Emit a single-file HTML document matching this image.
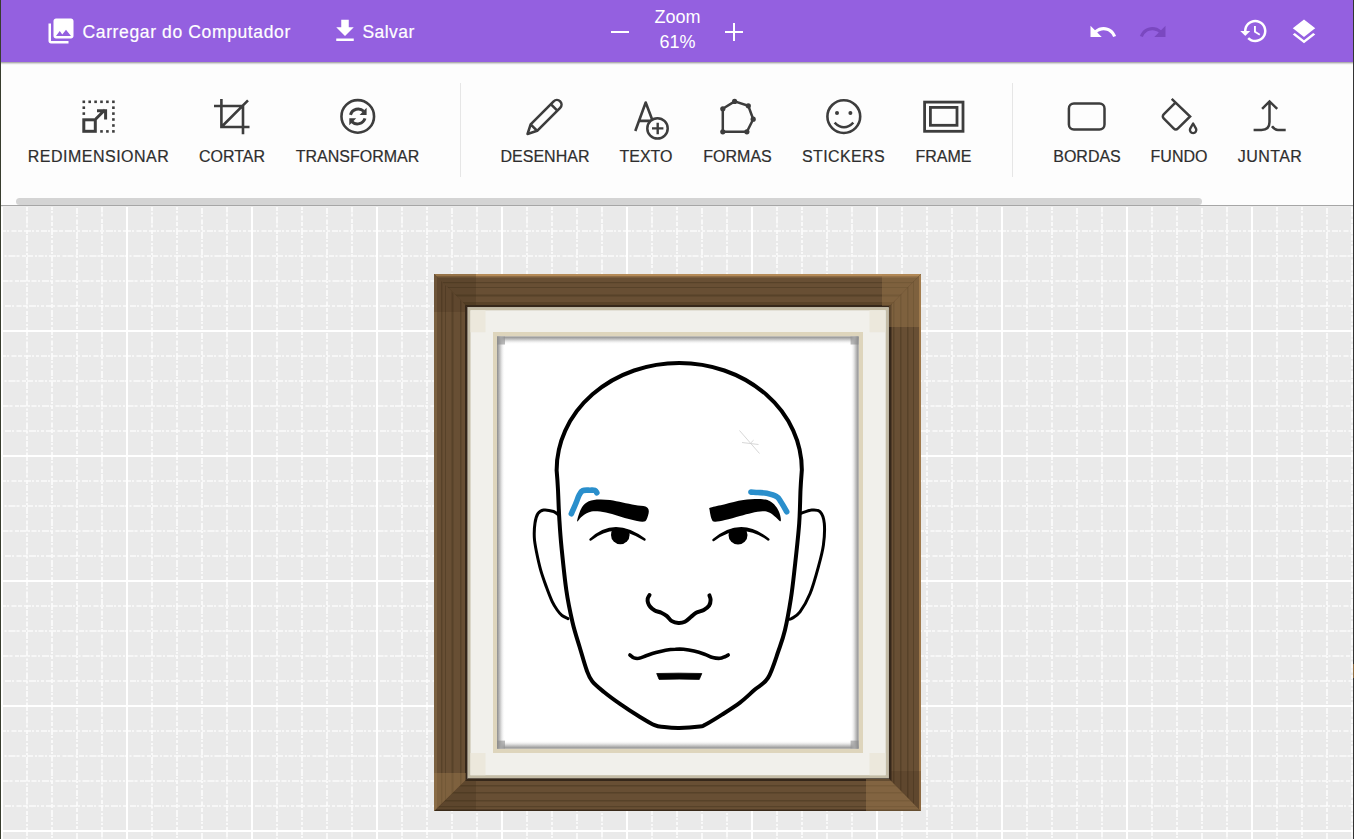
<!DOCTYPE html>
<html><head><meta charset="utf-8">
<style>
*{margin:0;padding:0;box-sizing:border-box}
html,body{width:1354px;height:839px;overflow:hidden}
body{position:relative;font-family:"Liberation Sans",sans-serif;background:#eaeaea}
#canvas{position:absolute;left:0;top:206px;width:1354px;height:633px;background-color:#eaeaea}
#topbar{position:absolute;left:0;top:0;width:1354px;height:62px;background:#9460e0;box-shadow:0 1px 2px rgba(0,0,0,.45);z-index:3}
#toolbar{position:absolute;left:0;top:62px;width:1354px;height:144px;background:#fdfdfd;border-bottom:1px solid #a6a6a6;z-index:2}
.tb{position:absolute;color:#fff;font-size:17.5px;line-height:18px;white-space:nowrap;-webkit-text-stroke:.2px #fff}
.ic{position:absolute}
.lbl{position:absolute;top:148.7px;font-size:16px;line-height:16px;color:#2e2e2e;-webkit-text-stroke:.2px #2e2e2e;white-space:nowrap;transform:translateX(-50%)}
.sep{position:absolute;top:83px;width:1px;height:94px;background:#e6e6e6}
#thumb{position:absolute;left:16px;top:198px;width:1186px;height:7px;border-radius:4px;background:#d4d4d4}
#lb{position:absolute;left:0;top:0;width:1px;height:839px;background:#383d2e;z-index:9}
#rb{position:absolute;right:0;top:0;width:1px;height:839px;background:#333;z-index:9}
</style></head><body>
<div id="canvas"><svg style="position:absolute;left:0;top:0" width="1354" height="633"><defs><pattern id="gp" x="0" y="0" width="125" height="125" patternUnits="userSpaceOnUse">
<g fill="#fff"><rect x="1" y="0" width="2" height="125"/><rect x="0" y="124" width="125" height="1"/><rect x="0" y="0" width="125" height="1"/></g>
<g stroke="#fff" stroke-width="1.7" opacity=".85">
<path d="M27 0V125" stroke-dasharray="5 1.5 2 2 7 1 3 2.5 4 1 6 2 2 1.5"/><path d="M52 0V125" stroke-dasharray="3 2 6 1 2 2.5 5 1.5 4 2 7 1 2 2" stroke-dashoffset="7"/><path d="M77 0V125" stroke-dasharray="3 2 6 1 2 2.5 5 1.5 4 2 7 1 2 2" stroke-dashoffset="3"/><path d="M102 0V125" stroke-dasharray="5 1.5 2 2 7 1 3 2.5 4 1 6 2 2 1.5" stroke-dashoffset="11"/>
<path d="M0 25H125" stroke-dasharray="3 2 6 1 2 2.5 5 1.5 4 2 7 1 2 2" stroke-dashoffset="5"/><path d="M0 50H125" stroke-dasharray="5 1.5 2 2 7 1 3 2.5 4 1 6 2 2 1.5" stroke-dashoffset="2"/><path d="M0 75H125" stroke-dasharray="5 1.5 2 2 7 1 3 2.5 4 1 6 2 2 1.5" stroke-dashoffset="9"/><path d="M0 100H125" stroke-dasharray="3 2 6 1 2 2.5 5 1.5 4 2 7 1 2 2"/>
</g></pattern></defs><rect width="1354" height="633" fill="url(#gp)"/></svg></div>
<div style="position:absolute;left:0;top:206px;width:1354px;height:1px;background:#ececec;z-index:1"></div>
<svg style="position:absolute;left:0;top:0;z-index:1" width="1354" height="839" viewBox="0 0 1354 839">
<defs>
 <clipPath id="cT"><path d="M434 274 H921 L888.7 307.3 H467.5 Z"/></clipPath>
 <clipPath id="cB"><path d="M434 811 H921 L888.7 778.2 H467.5 Z"/></clipPath>
 <clipPath id="cL"><path d="M434 274 L467.5 307.3 V778.2 L434 811 Z"/></clipPath>
 <clipPath id="cR"><path d="M921 274 L888.7 307.3 V778.2 L921 811 Z"/></clipPath>
 <linearGradient id="shT" x1="0" y1="0" x2="0" y2="1"><stop offset="0" stop-color="#8c8c8c"/><stop offset=".45" stop-color="#d0d0d0"/><stop offset="1" stop-color="#fff" stop-opacity="0"/></linearGradient>
 <linearGradient id="shB" x1="0" y1="1" x2="0" y2="0"><stop offset="0" stop-color="#8c8c8c"/><stop offset=".45" stop-color="#d0d0d0"/><stop offset="1" stop-color="#fff" stop-opacity="0"/></linearGradient>
 <linearGradient id="shL" x1="0" y1="0" x2="1" y2="0"><stop offset="0" stop-color="#8c8c8c"/><stop offset=".45" stop-color="#d0d0d0"/><stop offset="1" stop-color="#fff" stop-opacity="0"/></linearGradient>
 <linearGradient id="shR" x1="1" y1="0" x2="0" y2="0"><stop offset="0" stop-color="#8c8c8c"/><stop offset=".45" stop-color="#d0d0d0"/><stop offset="1" stop-color="#fff" stop-opacity="0"/></linearGradient>
</defs>
<rect x="434" y="274" width="487" height="537" fill="#5f482f"/>
<!-- mat -->
<rect x="467" y="307" width="422" height="472" fill="#f1f0eb"/>
<rect x="469" y="308.8" width="418.2" height="467.9" fill="none" stroke="#c4bca6" stroke-width="3"/>
<rect x="470.5" y="310.3" width="15" height="22" fill="#ece8dc"/>
<rect x="869.5" y="310.3" width="15.7" height="22" fill="#ece8dc"/>
<rect x="470.5" y="753" width="15" height="22.2" fill="#ece8dc"/>
<rect x="869.5" y="753" width="15.7" height="22.2" fill="#ece8dc"/>
<rect x="493" y="332" width="370" height="421" fill="#ded5bc"/>
<rect x="497" y="336.5" width="361.6" height="412.1" fill="#fff"/>
<rect x="497" y="336.5" width="361.6" height="8" fill="url(#shT)"/>
<rect x="497" y="740.6" width="361.6" height="8" fill="url(#shB)"/>
<rect x="497" y="336.5" width="8" height="412.1" fill="url(#shL)"/>
<rect x="850.6" y="336.5" width="8" height="412.1" fill="url(#shR)"/>
<rect x="497" y="336.5" width="8" height="8" fill="#8a8a8a" opacity=".6"/>
<rect x="850.6" y="336.5" width="8" height="8" fill="#8a8a8a" opacity=".6"/>
<rect x="497" y="740.6" width="8" height="8" fill="#8a8a8a" opacity=".6"/>
<rect x="850.6" y="740.6" width="8" height="8" fill="#8a8a8a" opacity=".6"/>
<!-- top wood -->
<g clip-path="url(#cT)">
 <rect x="434" y="274" width="487" height="32" fill="#684f34"/>
 <rect x="434" y="274" width="487" height="2.5" fill="#b58b58"/>
 <rect x="434" y="276.5" width="487" height="1" fill="#8a6a45"/>
 <rect x="434" y="282" width="487" height="1.2" fill="#574229"/>
 <rect x="434" y="287" width="487" height="1" fill="#574229"/>
 <rect x="434" y="294.5" width="487" height="2" fill="#574229"/>
 <rect x="434" y="302" width="487" height="3" fill="#594329"/>
 <rect x="434" y="305" width="487" height="2.5" fill="#35271a"/>
 <rect x="434" y="274" width="42" height="32" fill="#3a2a18" opacity=".25"/>
 <rect x="882" y="274" width="40" height="32" fill="#a98454" opacity=".35"/>
</g>
<!-- bottom wood -->
<g clip-path="url(#cB)">
 <rect x="434" y="779" width="487" height="32" fill="#684f34"/>
 <rect x="434" y="778" width="487" height="3" fill="#35271a"/>
 <rect x="434" y="785" width="487" height="1.5" fill="#574229"/>
 <rect x="434" y="792" width="487" height="1.5" fill="#574229"/>
 <rect x="434" y="800" width="487" height="1.5" fill="#574229"/>
 <rect x="434" y="806" width="487" height="1.2" fill="#574229"/>
 <rect x="434" y="809.5" width="487" height="1.5" fill="#3a2a1a"/>
 <rect x="434" y="779" width="42" height="32" fill="#3a2a18" opacity=".25"/>
 <rect x="866" y="779" width="56" height="32" fill="#a98454" opacity=".4"/>
</g>
<!-- left wood -->
<g clip-path="url(#cL)">
 <rect x="434" y="274" width="32" height="537" fill="#684f34"/>
 <rect x="434" y="274" width="3" height="537" fill="#7a6040"/>
 <rect x="441" y="274" width="1.4" height="537" fill="#574229"/>
 <rect x="445" y="274" width="1" height="537" fill="#574229"/>
 <rect x="451.5" y="274" width="2" height="537" fill="#574229"/>
 <rect x="460" y="274" width="1.5" height="537" fill="#574229"/>
 <rect x="465" y="274" width="3" height="537" fill="#35271a"/>
 <rect x="434" y="274" width="32" height="38" fill="#3a2a18" opacity=".2"/>
 <rect x="434" y="773" width="32" height="40" fill="#a98454" opacity=".35"/>
</g>
<!-- right wood -->
<g clip-path="url(#cR)">
 <rect x="889" y="274" width="32" height="537" fill="#684f34"/>
 <rect x="888.5" y="274" width="3" height="537" fill="#35271a"/>
 <rect x="893" y="274" width="1.5" height="537" fill="#574229"/>
 <rect x="900" y="274" width="1.5" height="537" fill="#574229"/>
 <rect x="907" y="274" width="1.5" height="537" fill="#574229"/>
 <rect x="913" y="274" width="1" height="537" fill="#574229"/>
 <rect x="919" y="274" width="2" height="537" fill="#a07a4c"/>
 <rect x="889" y="274" width="32" height="53" fill="#a98454" opacity=".35"/>
 <rect x="889" y="771" width="32" height="42" fill="#3a2a18" opacity=".2"/>
</g>
</svg>

<!--FACE--><svg style="position:absolute;left:0;top:0;z-index:1" width="1354" height="839" viewBox="0 0 1354 839">
<g fill="none" stroke="#000" stroke-linecap="round" stroke-linejoin="round">
<path d="M556.65 470 A122.6 107 0 0 1 801.85 470  C801.6 473.3 800.9 481.1 800.5 490.0 C800.1 498.9 800.1 510.9 799.2 523.4 C798.3 535.9 796.4 552.6 795.0 565.1 C793.6 577.6 792.6 587.7 790.9 598.5 C789.2 609.3 787.1 621.2 785.0 630.0 C782.9 638.8 781.2 643.0 778.4 651.0 C775.6 659.0 772.0 671.4 768.0 677.9 C764.0 684.4 759.3 685.7 754.6 689.8 C749.9 693.9 745.4 698.5 740.0 702.6 C734.6 706.7 727.8 710.9 722.0 714.6 C716.2 718.3 708.8 722.8 705.1 724.8 C701.4 726.8 704.1 726.0 699.8 726.5 C695.5 727.0 685.3 727.8 679.4 727.9 C673.5 728.0 668.4 727.5 664.3 727.0 C660.2 726.5 659.0 727.1 654.6 725.2 C650.2 723.3 643.5 719.0 637.7 715.5 C631.9 712.0 625.6 707.8 620.0 703.9 C614.4 700.0 608.6 695.8 604.0 692.0 C599.4 688.2 595.1 684.8 592.2 681.2 C589.3 677.6 588.9 676.2 586.8 670.5 C584.7 664.8 582.1 655.2 579.7 647.2 C577.3 639.2 574.7 631.7 572.5 622.2 C570.3 612.7 568.1 602.5 566.3 590.0 C564.5 577.5 562.7 559.1 561.5 547.2 C560.3 535.3 559.9 528.1 559.3 518.6 C558.7 509.1 558.4 498.1 558.0 490.0 C557.6 481.9 556.9 473.3 556.6 470.0" stroke-width="4"/>
<path d="M558.6 515.0 C557.8 514.4 556.1 512.3 553.6 511.5 C551.1 510.7 546.2 509.6 543.6 510.0 C541.0 510.4 539.3 511.5 537.9 513.6 C536.5 515.8 535.6 519.0 535.0 522.9 C534.4 526.8 534.1 532.4 534.3 537.2 C534.5 542.0 535.3 546.0 536.4 551.5 C537.5 557.0 539.0 564.1 540.7 570.1 C542.4 576.1 544.6 582.0 546.5 587.3 C548.4 592.5 550.4 597.8 552.2 601.6 C554.0 605.4 555.6 607.7 557.2 610.0 C558.8 612.3 560.2 614.1 562.0 615.5 C563.8 616.9 567.0 618.1 568.0 618.6" stroke-width="3"/>
<path d="M800.9 513.4 C802.7 512.8 808.5 510.3 811.7 510.0 C814.9 509.7 818.0 509.5 820.1 511.7 C822.2 513.9 823.8 517.8 824.3 523.4 C824.8 529.0 824.4 537.9 823.4 545.1 C822.4 552.3 820.6 558.7 818.4 566.8 C816.2 574.9 813.2 586.0 810.1 593.5 C807.0 601.0 803.1 607.7 800.0 611.9 C796.9 616.1 793.6 617.2 791.7 618.5 C789.8 619.8 789.0 619.2 788.4 619.4" stroke-width="3"/>
<path d="M649.5 595.1 C649.2 595.7 648.0 597.3 647.7 598.6 C647.5 599.9 647.6 601.4 648.0 602.8 C648.4 604.2 649.2 605.6 650.3 606.9 C651.4 608.2 653.0 609.5 654.8 610.5 C656.6 611.5 659.3 611.9 661.3 612.8 C663.3 613.7 664.8 614.4 666.6 615.8 C668.4 617.2 669.9 619.9 671.9 621.1 C673.9 622.3 676.2 622.8 678.4 622.9 C680.6 623.0 682.8 622.7 684.9 621.7 C687.0 620.7 688.9 618.5 690.8 617.0 C692.7 615.5 693.9 614.0 696.1 612.8 C698.3 611.6 701.6 611.1 703.8 609.9 C706.0 608.7 708.0 607.4 709.1 605.7 C710.2 604.0 710.6 601.5 710.6 599.8 C710.6 598.1 709.6 596.1 709.4 595.4" stroke-width="4"/>
<path d="M629.9 655.0 C630.6 655.5 632.4 657.4 633.9 657.9 C635.4 658.4 636.8 658.6 638.8 658.3 C640.8 657.9 643.2 656.8 646.1 655.8 C649.0 654.8 652.6 653.5 655.9 652.6 C659.1 651.7 662.4 650.8 665.6 650.2 C668.9 649.7 672.4 649.4 675.4 649.3 C678.4 649.1 680.4 649.0 683.5 649.3 C686.6 649.6 690.5 650.2 694.0 651.0 C697.5 651.8 701.5 653.1 704.6 654.2 C707.7 655.3 710.1 656.8 712.7 657.5 C715.3 658.2 718.0 658.4 720.0 658.3 C722.0 658.2 723.5 657.2 724.9 656.7 C726.3 656.2 727.7 655.3 728.2 655.0" stroke-width="3.6"/>
</g>
<g fill="#000">
<path d="M577.1 521.3 C577.0 520.0 579.3 512.3 580.9 509.2 C582.5 506.1 584.1 504.1 586.7 502.5 C589.3 500.9 592.8 500.0 596.7 499.6 C600.6 499.2 605.7 499.5 610.0 500.0 C614.3 500.5 618.4 501.7 622.6 502.5 C626.8 503.3 631.2 504.3 635.0 505.0 C638.8 505.7 643.2 505.5 645.5 506.5 C647.8 507.5 648.6 508.8 648.8 510.9 C649.0 513.0 647.7 517.4 646.7 519.2 C645.7 521.0 645.2 521.6 642.6 521.7 C640.0 521.8 634.9 520.6 630.9 519.6 C626.9 518.6 622.6 517.1 618.4 515.9 C614.2 514.7 609.8 513.3 605.9 512.5 C602.0 511.7 597.9 511.3 595.0 511.3 C592.1 511.3 590.6 511.6 588.4 512.5 C586.2 513.4 583.6 515.2 581.7 516.7 C579.8 518.2 577.2 522.5 577.1 521.3Z"/>
<path d="M710.8 507.5 C713.4 506.5 719.6 505.4 725.0 504.2 C730.4 502.9 737.1 500.8 743.4 500.0 C749.7 499.2 758.0 498.9 762.6 499.2 C767.2 499.5 768.5 500.3 770.9 501.7 C773.2 503.1 775.2 505.3 776.7 507.5 C778.2 509.7 779.5 512.7 780.1 515.0 C780.7 517.3 781.3 521.0 780.5 521.3 C779.7 521.6 777.0 518.2 775.1 516.7 C773.2 515.2 771.3 513.4 769.2 512.5 C767.1 511.6 765.5 511.2 762.6 511.3 C759.7 511.4 755.5 512.1 751.7 512.9 C747.9 513.7 744.5 514.7 740.0 515.9 C735.5 517.1 729.2 519.0 725.0 520.0 C720.8 521.0 717.2 521.8 715.0 521.7 C712.8 521.6 712.6 521.2 711.7 519.2 C710.8 517.2 709.8 511.9 709.6 510.0 C709.5 508.1 708.2 508.5 710.8 507.5Z"/>
<clipPath id="pl"><path d="M585 560 V539 Q614.5 517 650 539 V560Z"/></clipPath><clipPath id="pr"><path d="M708 560 V539 Q741 517 773 539 V560Z"/></clipPath>
<circle cx="620.3" cy="535" r="9.3" clip-path="url(#pl)"/>
<circle cx="738" cy="535" r="9.5" clip-path="url(#pr)"/>
<path d="M590.5 539.5 Q614.5 516.8 644.5 539.5 Q614.5 519.8 590.5 539.5Z" stroke="#000" stroke-width="2.4" stroke-linejoin="round"/>
<path d="M713.5 540 Q741 516.8 768.3 539.5 Q741 519.8 713.5 540Z" stroke="#000" stroke-width="2.4" stroke-linejoin="round"/>
<path d="M656.7 673.5 Q679 672.8 701.8 673.5 L699.3 679.4 Q679 678.8 659.1 679.4 Z" stroke="#000" stroke-width=".8" stroke-linejoin="round"/>
</g>
<g fill="none" stroke="#2a8fcc" stroke-width="5.6" stroke-linecap="round" stroke-linejoin="round">
<path d="M571.3 513.8 C572.1 512.0 574.7 506.2 576.0 503.0 C577.3 499.8 578.2 496.9 579.3 494.8 C580.4 492.7 581.0 491.4 582.8 490.6 C584.6 489.8 588.0 490.2 590.0 490.2 C592.0 490.2 593.9 490.0 595.0 490.4 C596.1 490.8 596.5 492.4 596.8 492.8"/>
<path d="M750.9 492.1 C752.1 492.2 755.4 492.3 758.0 492.5 C760.6 492.7 763.6 492.6 766.7 493.3 C769.8 494.0 774.3 495.2 776.7 496.7 C779.1 498.1 779.3 499.5 781.0 502.0 C782.7 504.5 785.8 510.1 786.7 511.7"/>
</g>
<g stroke="#cdcdcd" stroke-width=".8" fill="none"><path d="M739.5 430.5 L759.5 453.5 M742 442.5 L758.5 444.5 M751 442.7 L753.6 440.2"/></g>
</svg><!--/FACE-->
<div id="topbar">
 <svg class="ic" style="left:46px;top:16px" width="30" height="30" viewBox="0 0 24 24" fill="#fff"><path d="M22 16V4c0-1.1-.9-2-2-2H8c-1.1 0-2 .9-2 2v12c0 1.1.9 2 2 2h12c1.1 0 2-.9 2-2zm-11-4l2.03 2.71L16 11l4 5H8l3-4zM2 6v14c0 1.1.9 2 2 2h14v-2H4V6H2z"/></svg>
 <div class="tb" style="left:82.5px;top:23px;letter-spacing:.63px">Carregar do Computador</div>
 <svg class="ic" style="left:330px;top:16px" width="30" height="30" viewBox="0 0 24 24" fill="#fff"><path d="M19 9h-4V3H9v6H5l7 7 7-7zM5 18v2h14v-2H5z"/></svg>
 <div class="tb" style="left:362.5px;top:23px;letter-spacing:.42px">Salvar</div>
 <div class="tb" style="left:611px;top:30.5px;width:18px;height:2px;background:#fff"></div>
 <div class="tb" style="left:725px;top:30.5px;width:18px;height:2px;background:#fff"></div>
 <div class="tb" style="left:733px;top:23px;width:2px;height:18px;background:#fff"></div>
 <div class="tb" style="left:654.5px;top:8.2px;font-size:18px;-webkit-text-stroke:0">Zoom</div>
 <div class="tb" style="left:659.5px;top:33px;font-size:18px;-webkit-text-stroke:0">61%</div>
 <svg class="ic" style="left:1088px;top:17px" width="30" height="30" viewBox="0 0 24 24" fill="#fff"><path d="M12.5 8c-2.65 0-5.05.99-6.9 2.6L2 7v9h9l-3.62-3.62c1.39-1.16 3.16-1.88 5.12-1.88 3.54 0 6.55 2.31 7.6 5.5l2.37-.78C21.08 11.03 17.15 8 12.5 8z"/></svg>
 <svg class="ic" style="left:1138px;top:17px" width="30" height="30" viewBox="0 0 24 24" fill="#7a48c0"><path d="M18.4 10.6C16.55 8.99 14.15 8 11.5 8c-4.65 0-8.58 3.03-9.96 7.22L3.9 16c1.05-3.19 4.05-5.5 7.6-5.5 1.95 0 3.73.72 5.12 1.88L13 16h9V7l-3.6 3.6z"/></svg>
 <svg class="ic" style="left:1239px;top:16px" width="30" height="30" viewBox="0 0 24 24" fill="#fff"><path d="M13 3c-4.97 0-9 4.03-9 9H1l3.89 3.89.07.14L9 12H6c0-3.87 3.13-7 7-7s7 3.13 7 7-3.13 7-7 7c-1.93 0-3.68-.79-4.94-2.06l-1.42 1.42C8.270 19.99 10.51 21 13 21c4.97 0 9-4.03 9-9s-4.03-9-9-9zm-1 5v5l4.28 2.54.72-1.21-3.5-2.08V8H12z"/></svg>
 <svg class="ic" style="left:1289px;top:17px" width="30" height="30" viewBox="0 0 24 24" fill="#fff"><path d="M11.99 18.54l-7.37-5.73L3 14.07l9 7 9-7-1.63-1.27-7.38 5.74zM12 16l7.36-5.73L21 9l-9-7-9 7 1.63 1.27L12 16z"/></svg>
</div>
<div id="toolbar"></div>
<div style="position:absolute;left:0;top:0;width:1354px;height:206px;z-index:4">
 <div class="lbl" style="left:98.5px;letter-spacing:.5px">REDIMENSIONAR</div>
 <div class="lbl" style="left:232px">CORTAR</div>
 <div class="lbl" style="left:357.5px">TRANSFORMAR</div>
 <div class="sep" style="left:460px"></div>
 <div class="lbl" style="left:545px">DESENHAR</div>
 <div class="lbl" style="left:646px">TEXTO</div>
 <div class="lbl" style="left:737.5px">FORMAS</div>
 <div class="lbl" style="left:843.5px;letter-spacing:.4px">STICKERS</div>
 <div class="lbl" style="left:943.5px">FRAME</div>
 <div class="sep" style="left:1012px"></div>
 <div class="lbl" style="left:1087px">BORDAS</div>
 <div class="lbl" style="left:1179px">FUNDO</div>
 <div class="lbl" style="left:1270px;letter-spacing:.4px">JUNTAR</div>
 <div id="thumb"></div>
</div>
<svg style="position:absolute;left:0;top:0;z-index:5" width="1354" height="206" viewBox="0 0 1354 206">
<g fill="none" stroke="#3d3d3d" stroke-width="2.6">
 <!-- resize -->
 <rect x="83.8" y="119.8" width="11.5" height="11.5" stroke-width="3"/>
 <path d="M95.5 119.3 L105 109.8 M97 110.8 H105.6 V119.4" stroke-width="3"/>
 <!-- crop -->
 <path d="M214 106 H243 V134.3 M221.4 98.9 V127 H249.5 M221.4 127 L248 100.3"/>
 <!-- transform -->
 <circle cx="357.75" cy="116.4" r="16.3" stroke-width="2.6"/>
 <path d="M350.5 114.8 A8 8 0 0 1 363.8 111.3 M365 118.4 A8 8 0 0 1 351.8 121.6" stroke-width="3"/>
 <!-- pencil -->
 <g transform="translate(527.2 134.3) rotate(-45)">
  <path d="M0.5 0 L9.5 -4.6 H42 A4.6 4.6 0 0 1 42 4.6 H9.5 Z M9.5 -4.6 V4.6 M38 -4.6 V4.6" stroke-linejoin="round"/>
 </g>
 <!-- text add -->
 <path d="M635.3 131 L645.7 102.5 L652.5 120.5 M639.5 120.9 H651" stroke-linejoin="round"/>
 <circle cx="657.5" cy="128.4" r="10.2" stroke-width="2.5"/>
 <path d="M652 128.4 H663.4 M657.7 122.8 V134.2" stroke-width="2.4"/>
 <!-- polygon -->
 <path d="M722.8 108.8 L734.6 101.4 L748.3 105.8 L753.2 119.2 L746.9 131.8 H722.8 Z" stroke-width="2.5"/>
 <!-- smiley -->
 <circle cx="843.8" cy="116.6" r="16.4" stroke-width="2.6"/>
 <path d="M834.6 122.6 Q844 132 853.3 122.6" stroke-width="2.6"/>
 <!-- frame -->
 <rect x="924.6" y="102.1" width="38.4" height="29.2" stroke-width="2.8"/>
 <rect x="930.4" y="107.4" width="26.6" height="17.9" stroke-width="2.8"/>
 <!-- rounded rect -->
 <rect x="1068.9" y="103.5" width="35.6" height="26" rx="5" stroke-width="2.5"/>
 <!-- bucket -->
 <path d="M1171.7 98.9 L1190.1 116.5 L1178 128.4 Q1175.8 130.6 1173.6 128.4 L1163.9 118.6 Q1161.7 116.4 1163.9 114.2 L1174.7 103.3" stroke-width="2.5"/>
 <path d="M1193.1 123.5 L1190.2 128.6 A3.2 3.2 0 1 0 1196 128.6 Z" stroke-width="2.4" stroke-linejoin="round"/>
 <!-- merge -->
 <path d="M1262.1 108.8 L1269.5 101.4 L1277.2 108.8 M1269.5 101.5 V122 Q1269.5 129.9 1261.5 129.9 H1253.6 M1272 126.3 Q1274.5 129.9 1278 129.9 H1285.7" stroke-width="2.5"/>
</g>
<g fill="#3d3d3d">
 <!-- resize dots -->
 <rect x="82.5" y="100.5" width="2.6" height="2.6"/><rect x="88.4" y="100.5" width="2.6" height="2.6"/><rect x="94.3" y="100.5" width="2.6" height="2.6"/><rect x="100.2" y="100.5" width="2.6" height="2.6"/><rect x="106.1" y="100.5" width="2.6" height="2.6"/><rect x="112.1" y="100.5" width="2.6" height="2.6"/>
 <rect x="112.1" y="106.4" width="2.6" height="2.6"/><rect x="112.1" y="112.3" width="2.6" height="2.6"/><rect x="112.1" y="118.2" width="2.6" height="2.6"/><rect x="112.1" y="124.2" width="2.6" height="2.6"/><rect x="112.1" y="130.1" width="2.6" height="2.6"/>
 <rect x="100.2" y="130.1" width="2.6" height="2.6"/><rect x="106.1" y="130.1" width="2.6" height="2.6"/>
 <rect x="82.5" y="106.4" width="2.6" height="2.6"/><rect x="82.5" y="112.3" width="2.6" height="2.6"/>
 <!-- sync arrowheads -->
 <path d="M366.6 107.8 V115 H359.6 Z M349.3 118.2 H356.2 L349.3 125.2 Z"/>
 <!-- polygon dots -->
 <circle cx="722.8" cy="108.8" r="2.6"/><circle cx="734.6" cy="101.4" r="2.6"/><circle cx="748.3" cy="105.8" r="2.6"/><circle cx="753.2" cy="119.2" r="2.6"/><circle cx="746.9" cy="131.8" r="2.6"/><circle cx="722.8" cy="131.8" r="2.6"/>
 <!-- smiley eyes -->
 <circle cx="837" cy="113" r="2"/><circle cx="850.4" cy="113" r="2"/>
</g>
</svg>

<div id="lb"></div><div id="rb"></div>
<div style="position:absolute;left:1353px;top:664px;width:1px;height:14px;background:#8d6b40;z-index:10"></div>
</body></html>
